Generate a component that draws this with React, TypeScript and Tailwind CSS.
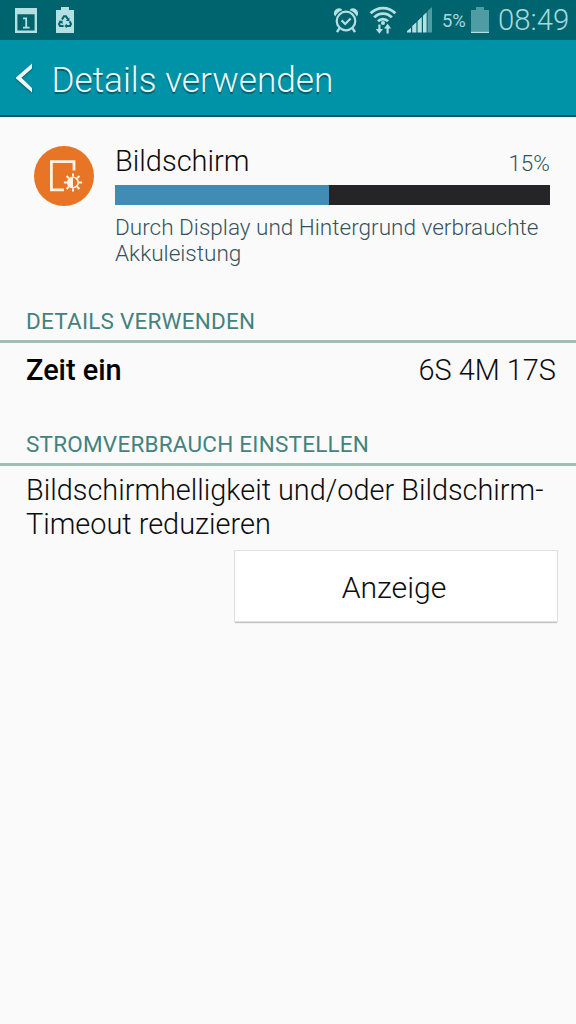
import type { ReactNode } from 'react'

const usage = {
  name: 'Bildschirm',
  percent: '15%',
  barWidth: 49.2,
  description: ['Durch Display und Hintergrund verbrauchte', 'Akkuleistung'],
}

function CalendarIcon() {
  return (
    <svg width="24" height="25" viewBox="0 0 24 25" className="text-[#b4e0e2]">
      <path fillRule="evenodd" fill="currentColor" d="M1 0H23V25H1zM3.4 6.2V22.6H20.6V6.2z" />
      <path fill="none" stroke="currentColor" strokeWidth="1.8" d="M9 10.4H12.2V19.4M9 19.6H15.6" />
    </svg>
  )
}

function RecycleBatteryIcon() {
  return (
    <svg width="18" height="26" viewBox="0 0 18 26">
      <path fill="#b4e0e2" d="M5 0H13V3H18V26H0V3H5z" />
      <g fill="none" stroke="#00646f" strokeWidth="2">
        <path d="M6 12.6L8 9.2H10L12 12.4" />
        <path d="M13.6 14.2L15 17L14 19H10.2" />
        <path d="M7.6 19H4L3 17L4.6 14.2" />
      </g>
      <path fill="#00646f" d="M13.4 10.6V14H9.8zM10.8 16.6V21.2L8.4 19zM2.6 13.8H6.6V17.2z" />
    </svg>
  )
}

function AlarmIcon() {
  return (
    <svg width="26" height="26" viewBox="0 0 26 26" fill="none" stroke="#b4e0e2">
      <circle cx="13" cy="14" r="9.3" strokeWidth="2.2" />
      <path strokeWidth="2.2" d="M8.6 13.4L12.2 17L17.6 11.4" />
      <path strokeWidth="2.4" d="M6.4 21.4L4 25.2M19.6 21.4L22 25.2" />
      <path fill="#b4e0e2" stroke="none" d="M1 7.4A5.2 5.2 0 0 1 8.6 2L9.2 3.2A11.6 11.6 0 0 0 2.2 9.6zM25 7.4A5.2 5.2 0 0 0 17.4 2L16.8 3.2A11.6 11.6 0 0 1 23.8 9.6z" />
    </svg>
  )
}

function WifiIcon() {
  return (
    <svg width="28" height="28" viewBox="0 0 28 28" fill="none" stroke="#b4e0e2">
      <path strokeWidth="2.8" d="M1.6 7.2A17.5 17.5 0 0 1 26.4 7.2M5.2 11.4A12 12 0 0 1 22.8 11.4M9 15.2A7 7 0 0 1 19 15.2" />
      <circle cx="14" cy="17" r="2" fill="#b4e0e2" stroke="none" />
      <path strokeWidth="2.2" d="M10.4 18.6V25M18.6 27.4V21" />
      <path fill="#b4e0e2" stroke="none" d="M6.8 23H14L10.4 27.8zM15 22.6H22.2L18.6 17.8z" />
    </svg>
  )
}

function SignalIcon() {
  return (
    <svg width="26" height="26" viewBox="0 0 26 26">
      <path fill="#b4e0e2" d="M0 25.5V24L4 20.8V25.5zM5.2 25.5V19L9.4 15.2V25.5zM10.6 25.5V14L14.8 10V25.5z" />
      <path fill="#b4e0e2" d="M16 25.5V8.8L19.6 5.2V25.5z" />
      <path fill="#4f9ca4" d="M20.6 25.5V4L25 0V25.5z" />
    </svg>
  )
}

function BatteryIcon() {
  return (
    <svg width="18" height="26" viewBox="0 0 18 26">
      <path fill="#4f9ca4" d="M5 0H13V3H18V26H0V3H5z" />
      <path fill="#b4e0e2" d="M0 24.8H18V26H0z" />
    </svg>
  )
}

function StatusBar() {
  return (
    <header className="flex h-10 items-center bg-[#00646f] pr-2 pl-3.5 text-[#a4d9dd]">
      <CalendarIcon />
      <div className="ml-[18px]">
        <RecycleBatteryIcon />
      </div>
      <div className="ml-auto flex items-center">
        <AlarmIcon />
        <div className="ml-[10px]">
          <WifiIcon />
        </div>
        <div className="ml-[10px]">
          <SignalIcon />
        </div>
        <span className="ml-[9px] w-[26px] pt-0.5 text-[18.4px] leading-none whitespace-nowrap">5%</span>
        <div className="ml-[3px]">
          <BatteryIcon />
        </div>
        <span className="ml-[9px] w-[70px] text-[29.3px] leading-10 font-light whitespace-nowrap">08:49</span>
      </div>
    </header>
  )
}

function TitleBar() {
  return (
    <div className="flex h-[77px] items-center border-b-2 border-[#0b4f5c] bg-[#0093a8] pl-[15px] text-[#eefafb]">
      <svg width="18" height="30" viewBox="0 0 18 30" className="drop-shadow-[0_1px_1px_rgba(0,50,60,0.6)]">
        <path fill="currentColor" d="M17 0.5V5.4L6.4 14.8L17 25V29.5L1 15.4V14.4z" />
      </svg>
      <h1 className="ml-[18.5px] pt-[5px] text-[35.2px] leading-[70px] font-light whitespace-nowrap [text-shadow:0_1.5px_1px_rgba(0,50,60,0.6)]">
        Details verwenden
      </h1>
    </div>
  )
}

function DisplayIcon() {
  const rays = [0, 45, 90, 135, 180, 225, 270, 315]
  return (
    <svg width="60" height="60" viewBox="0 0 60 60">
      <circle cx="30" cy="30" r="30" fill="#e87425" />
      <g fill="none" stroke="#fff3e4" strokeWidth="2.8">
        <path d="M40 24.5V15.6H17.4V43.8H30" />
        <circle cx="39" cy="36.5" r="5.2" strokeWidth="1.6" />
        {rays.map((deg) => (
          <path key={deg} strokeWidth="2" d="M39 30.6V27.4" transform={`rotate(${deg} 39 36.5)`} />
        ))}
      </g>
      <path fill="#fff3e4" d="M39 31.3A5.2 5.2 0 0 0 39 41.7z" />
    </svg>
  )
}

function SectionHeader({ children }: { children: ReactNode }) {
  return (
    <h2 className="h-[43px] border-b-[3px] border-[#9fbfb5] pl-[26px] text-[22.5px] leading-[43px] tracking-[0.22px] whitespace-nowrap text-[#43827f] uppercase">
      {children}
    </h2>
  )
}

export default function App() {
  return (
    <div className="h-[1024px] w-[576px] overflow-hidden bg-[#fafafa] font-['Roboto',sans-serif] text-[#0c0c0c]">
      <StatusBar />
      <TitleBar />

      <main>
        {/* Usage summary */}
        <section className="flex h-[183px] pt-[29px] pl-[34px]">
          <DisplayIcon />
          <div className="ml-[21px] w-[435px]">
            <div className="flex h-[39px] justify-between">
              <span className="text-[29px] leading-[31px] font-light">{usage.name}</span>
              <span className="text-[22.5px] leading-[35px] font-light text-[#35535c]">{usage.percent}</span>
            </div>
            <div className="h-[20px] bg-[#252528]">
              <div className="h-full bg-[#408cb4]" style={{ width: `${usage.barWidth}%` }} />
            </div>
            <p className="pt-[10px] text-[22.55px] leading-[26px] font-light whitespace-nowrap text-[#35535c]">
              {usage.description[0]}
              <br />
              {usage.description[1]}
            </p>
          </div>
        </section>

        <section className="h-[123px]">
          <SectionHeader>Details verwenden</SectionHeader>
          <div className="flex justify-between pr-5 pl-[26px] text-[28.9px] leading-[54px]">
            <span className="font-medium text-black">Zeit ein</span>
            <span className="font-light">6S 4M 17S</span>
          </div>
        </section>

        <section>
          <SectionHeader>Stromverbrauch einstellen</SectionHeader>
          <p className="pt-[7px] pl-[26px] text-[28.9px] leading-[34px] font-light whitespace-nowrap">
            Bildschirmhelligkeit und/oder Bildschirm-
            <br />
            Timeout reduzieren
          </p>
          <button className="mt-[9px] ml-[234px] block h-[72px] w-[324px] border border-[#e0e0e0] bg-white pt-[3px] pr-[4px] text-[30.2px] font-light shadow-[0_2px_1px_-1px_rgba(0,0,0,0.22)]">
            Anzeige
          </button>
        </section>
      </main>
    </div>
  )
}
